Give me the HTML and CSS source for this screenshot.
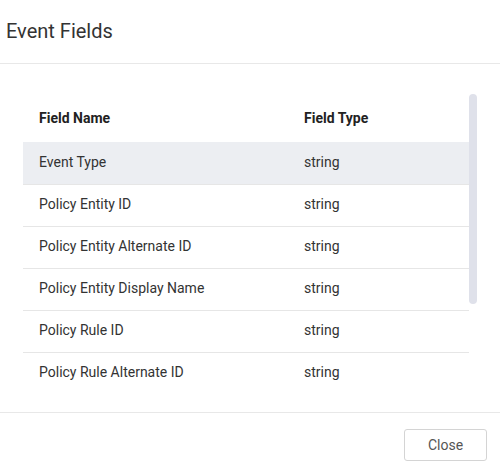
FILE: index.html
```html
<!DOCTYPE html>
<html>
<head>
<meta charset="utf-8">
<link rel="stylesheet" href="styles.css">
</head>
<body>
<div class="dialog">
  <div class="dialog-header"><h1 class="title">Event Fields</h1></div>
  <div class="dialog-body">
    <div class="scroll-wrap">
      <div class="scroller">
        <table class="fields">
          <thead>
            <tr><th class="c-name">Field Name</th><th>Field Type</th></tr>
          </thead>
          <tbody>
            <tr class="hover"><td>Event Type</td><td>string</td></tr>
            <tr><td>Policy Entity ID</td><td>string</td></tr>
            <tr><td>Policy Entity Alternate ID</td><td>string</td></tr>
            <tr><td>Policy Entity Display Name</td><td>string</td></tr>
            <tr><td>Policy Rule ID</td><td>string</td></tr>
            <tr><td>Policy Rule Alternate ID</td><td>string</td></tr>
            <tr><td>Policy Rule Display Name</td><td>string</td></tr>
            <tr><td>Policy Rule Version</td><td>string</td></tr>
            <tr><td>Timestamp</td><td>string</td></tr>
          </tbody>
        </table>
      </div>
      <div class="thumb"></div>
    </div>
  </div>
  <div class="dialog-footer"><button class="btn">Close</button></div>
</div>
</body>
</html>
```
FILE: styles.css
```css
* { box-sizing: border-box; }
html, body { margin: 0; padding: 0; background: #fff; }
body { font-family: Roboto, "Noto Sans", sans-serif; color: #333; }
.dialog { width: 500px; height: 476px; display: flex; flex-direction: column; }
.dialog-header { height: 64px; border-bottom: 1px solid #e8e8e8; display: flex; align-items: center; padding: 0 6px 2px 6px; }
.title { margin: 0; font-size: 20px; font-weight: 400; color: #333; line-height: 24px; }
.dialog-body { height: 349px; padding: 30px 23px 0 23px; border-bottom: 1px solid #e8e8e8; }
.scroll-wrap { position: relative; width: 454px; height: 299px; }
.scroller { height: 299px; width: 446px; overflow-y: auto; scrollbar-width: none; }
.scroller::-webkit-scrollbar { display: none; }
.thumb { position: absolute; right: 0; top: 0; width: 8px; height: 210px; background: #dfe1ea; border-radius: 4px; }
.fields { width: 446px; border-collapse: collapse; font-size: 14px; }
.fields th { text-align: left; font-weight: 700; height: 48px; padding: 0 16px 1px 16px; color: #222; }
.fields th.c-name { width: 265px; }
.fields td { height: 42px; padding: 0 16px 2px 16px; border-bottom: 1px solid #e6e6e6; color: #333; }
.fields tr.hover td { background: #eceef2; }
.dialog-footer { flex: 1; display: flex; justify-content: flex-end; align-items: flex-start; padding: 16px 13px 0 0; }
.btn { width: 83px; height: 32px; border: 1px solid #d4d4d4; border-radius: 3px; background: #fff; font-family: Roboto, sans-serif; font-size: 14px; color: #555; cursor: pointer; }
```
